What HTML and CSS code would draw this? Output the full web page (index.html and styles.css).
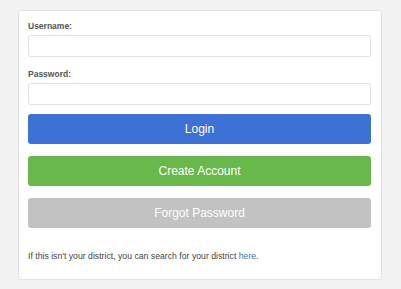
FILE: index.html
```html
<!DOCTYPE html>
<html lang="en">
<head>
  <meta charset="UTF-8" />
  <title>Login</title>
  <link rel="stylesheet" href="styles.css">
</head>
<body>
  <div class="card">
    <form class="login-form">
      <label class="field-label" for="username">Username:</label>
      <input class="field-input" id="username" type="text" />

      <label class="field-label second" for="password">Password:</label>
      <input class="field-input" id="password" type="password" />

      <button type="button" class="btn btn-login">Login</button>
      <button type="button" class="btn btn-create">Create Account</button>
      <button type="button" class="btn btn-forgot">Forgot Password</button>
    </form>

    <p class="district-note">If this isn't your district, you can search for your district <a href="#">here</a>.</p>
  </div>
</body>
</html>
```

FILE: styles.css
```css
* {
  box-sizing: border-box;
}

body {
  margin: 0;
  padding: 10px 0 0 18px;
  background: #f2f2f2;
  font-family: "Liberation Sans", Arial, sans-serif;
  color: #444;
}

.card {
  width: 364px;
  height: 270px;
  background: #ffffff;
  border: 1px solid #e2e2e2;
  border-radius: 3px;
  padding: 9px 10px 0 9px;
}

.login-form {
  display: flex;
  flex-direction: column;
}

.field-label {
  font-size: 8.5px;
  font-weight: 700;
  color: #555;
  line-height: 12px;
  height: 12px;
  margin-bottom: 3px;
}

.field-label.second {
  margin-top: 11px;
  margin-bottom: 3px;
}

.field-input {
  height: 22px;
  width: 100%;
  border: 1px solid #e4e4e4;
  border-radius: 2px;
  background: #fff;
  margin: 0;
}

.btn {
  height: 30px;
  width: 100%;
  border: none;
  border-radius: 3px;
  color: #fff;
  font-family: "Liberation Sans", Arial, sans-serif;
  font-size: 12px;
  padding: 0;
  margin-top: 12px;
}

.btn-login {
  background: #3e71d4;
  margin-top: 9px;
}

.btn-create {
  background: #69b84c;
}

.btn-forgot {
  background: #c2c2c2;
}

.district-note {
  margin: 23px 0 0 0;
  font-size: 8.7px;
  color: #444;
}

.district-note a {
  color: #3c6fcf;
  text-decoration: none;
}
```
